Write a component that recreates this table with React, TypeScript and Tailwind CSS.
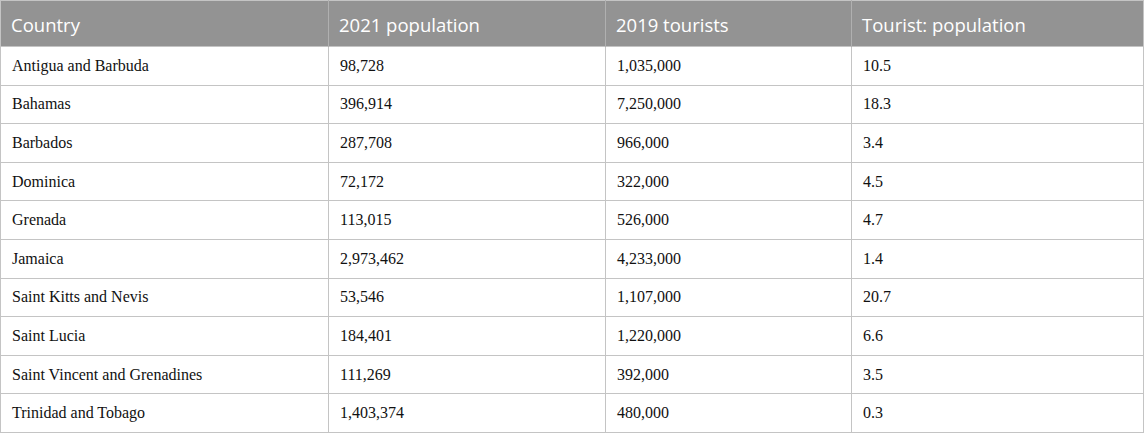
import React from "react";

const rows: [string, string, string, string][] = [
  ["Antigua and Barbuda", "98,728", "1,035,000", "10.5"],
  ["Bahamas", "396,914", "7,250,000", "18.3"],
  ["Barbados", "287,708", "966,000", "3.4"],
  ["Dominica", "72,172", "322,000", "4.5"],
  ["Grenada", "113,015", "526,000", "4.7"],
  ["Jamaica", "2,973,462", "4,233,000", "1.4"],
  ["Saint Kitts and Nevis", "53,546", "1,107,000", "20.7"],
  ["Saint Lucia", "184,401", "1,220,000", "6.6"],
  ["Saint Vincent and Grenadines", "111,269", "392,000", "3.5"],
  ["Trinidad and Tobago", "1,403,374", "480,000", "0.3"],
];

const headers = ["Country", "2021 population", "2019 tourists", "Tourist: population"];

export default function App() {
  return (
    <div className="w-[1145px] h-[433px] bg-white">
      <table className="w-[1144px] border-collapse table-fixed border border-[#c4c4c4]">
        <colgroup>
          <col className="w-[328px]" />
          <col className="w-[277px]" />
          <col className="w-[246px]" />
          <col />
        </colgroup>
        <thead>
          <tr className="h-[46px] bg-[#939393]">
            {headers.map((h, i) => (
              <th
                key={h}
                className={`text-left font-normal text-white text-[18.5px] px-[10px] pt-[2px] align-middle font-['Open_Sans',sans-serif] ${i > 0 ? "border-l border-[#b0b0b0]" : ""}`}
              >
                {h}
              </th>
            ))}
          </tr>
        </thead>
        <tbody>
          {rows.map((r) => (
            <tr key={r[0]} className="h-[38.6px] border-t border-[#c4c4c4]">
              {r.map((c, i) => (
                <td
                  key={i}
                  className="px-[11px] text-[16px] text-[#111] align-middle border-l border-[#c4c4c4] font-['Liberation_Serif',serif]"
                >
                  {c}
                </td>
              ))}
            </tr>
          ))}
        </tbody>
      </table>
    </div>
  );
}
